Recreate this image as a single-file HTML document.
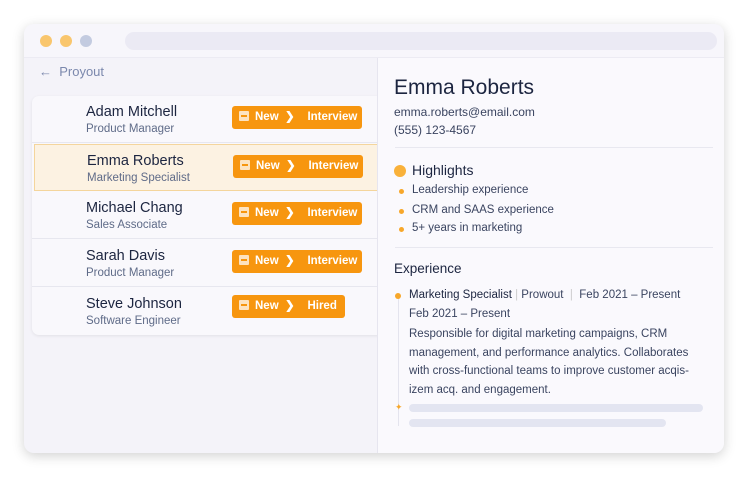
<!DOCTYPE html>
<html><head><style>
*{margin:0;padding:0;box-sizing:border-box}
body{width:750px;height:484px;background:#fff;font-family:"Liberation Sans",sans-serif;position:relative;overflow:hidden}
.win{position:absolute;left:24px;top:24px;width:700px;height:429px;background:#f4f3f9;border-radius:10px;box-shadow:0 3px 12px rgba(0,0,0,.18);overflow:hidden}
.top{position:absolute;left:0;top:0;width:700px;height:34px;border-bottom:1px solid #ecebf3;background:#f7f6fb}
.dot{position:absolute;top:11px;width:12px;height:12px;border-radius:50%}
.url{position:absolute;left:101px;top:8px;width:592px;height:18px;border-radius:9px;background:#ebeaf4}
.back{position:absolute;left:15px;top:40px;font-size:13px;color:#7b88ad}
.card{position:absolute;left:8px;top:72px;width:352px;height:239px;background:#f9f8fc;border-radius:7px;box-shadow:0 1px 3px rgba(0,0,0,.08)}
.row{position:absolute;left:0;width:352px;height:47px;border-bottom:1px solid #e7e7ef}
.row.sel{background:#fcf2e2;border:1px solid #f4d59c;left:2px;width:350px}
.nm{position:absolute;left:54px;top:8px;font-size:14.5px;color:#1c2540}
.sb{position:absolute;left:54px;top:27px;font-size:11.5px;color:#5f6b88}
.bd{position:absolute;left:200px;top:10px;height:23px;background:#f7960f;border-radius:3px;color:#fff;font-weight:bold;font-size:11.5px;line-height:23px;padding-left:7px}
.bd i{display:inline-block;width:10px;height:10px;background:#fde3c0;border-radius:1px;vertical-align:-1px;margin-right:6px;position:relative}
.bd i:after{content:"";position:absolute;left:2px;top:4px;width:6px;height:2px;background:#f7960f}
.right{position:absolute;left:353px;top:34px;width:347px;height:395px;background:#faf9fd;border-left:1px solid #e6e5ef}
.hr{position:absolute;left:17px;width:318px;height:1px;background:#e8e8f0}
.t{position:absolute;white-space:nowrap}
.bl{position:absolute;width:5px;height:5px;border-radius:50%;background:#f7a72a}
</style></head><body>
<div class="win">
<div class="top"><div class="dot" style="left:16px;background:#f9c66d"></div><div class="dot" style="left:36px;background:#f9c66d"></div><div class="dot" style="left:56px;background:#c3cbe0"></div><div class="url"></div></div>
<div class="back">&#8592;&nbsp;&nbsp;Proyout</div>
<div class="card">
<div class="row" style="top:0"><div class="nm">Adam Mitchell</div><div class="sb">Product Manager</div><div class="bd" style="width:130px"><i></i>New&nbsp;&nbsp;&#x276F;&nbsp;&nbsp;&nbsp;&nbsp;Interview</div></div>
<div class="row sel" style="top:48px"><div class="nm" style="left:52px">Emma Roberts</div><div class="sb" style="left:52px">Marketing Specialist</div><div class="bd" style="left:198px;width:130px"><i></i>New&nbsp;&nbsp;&#x276F;&nbsp;&nbsp;&nbsp;&nbsp;Interview</div></div>
<div class="row" style="top:96px"><div class="nm">Michael Chang</div><div class="sb">Sales Associate</div><div class="bd" style="width:130px"><i></i>New&nbsp;&nbsp;&#x276F;&nbsp;&nbsp;&nbsp;&nbsp;Interview</div></div>
<div class="row" style="top:144px"><div class="nm">Sarah Davis</div><div class="sb">Product Manager</div><div class="bd" style="width:130px"><i></i>New&nbsp;&nbsp;&#x276F;&nbsp;&nbsp;&nbsp;&nbsp;Interview</div></div>
<div class="row" style="top:192px;border:none"><div class="nm">Steve Johnson</div><div class="sb">Software Engineer</div><div class="bd" style="top:7px;width:113px"><i></i>New&nbsp;&nbsp;&#x276F;&nbsp;&nbsp;&nbsp;&nbsp;Hired</div></div>
</div>
<div class="right">
<div class="t" style="left:16px;top:18px;font-size:21px;color:#1c2540">Emma Roberts</div>
<div class="t" style="left:16px;top:47px;font-size:12px;color:#3a4460">emma.roberts@email.com</div>
<div class="t" style="left:16px;top:65px;font-size:12px;color:#3a4460">(555) 123-4567</div>
<div class="hr" style="top:89px"></div>
<div style="position:absolute;left:16px;top:107px;width:12px;height:12px;border-radius:50%;background:#f9b13a"></div>
<div class="t" style="left:34px;top:104px;font-size:14px;color:#1c2540">Highlights</div>
<div class="bl" style="left:21px;top:131px"></div><div class="t" style="left:34px;top:126px;font-size:11.5px;color:#3a4460">Leadership experience</div>
<div class="bl" style="left:21px;top:151px"></div><div class="t" style="left:34px;top:146px;font-size:11.5px;color:#3a4460">CRM and SAAS experience</div>
<div class="bl" style="left:21px;top:169px"></div><div class="t" style="left:34px;top:164px;font-size:11.5px;color:#3a4460">5+ years in marketing</div>
<div class="hr" style="top:189px"></div>
<div class="t" style="left:16px;top:203px;font-size:13.5px;color:#1c2540">Experience</div>
<div style="position:absolute;left:20px;top:238px;width:1px;height:130px;background:#e4e4ee"></div>
<div class="bl" style="left:17px;top:235px;width:6px;height:6px"></div>
<div class="t" style="left:31px;top:231px;font-size:11.5px;color:#3a4460"><span style="color:#1c2540">Marketing Specialist</span> <span style="color:#ccc">|</span> Prowout &nbsp;<span style="color:#ccc">|</span>&nbsp; Feb 2021 – Present</div>
<div class="t" style="left:31px;top:250px;font-size:11.5px;color:#3a4460">Feb 2021 – Present</div>
<div style="position:absolute;left:31px;top:267px;width:320px;font-size:11.5px;line-height:18.5px;color:#3a4460;white-space:nowrap">Responsible for digital marketing campaigns, CRM<br>management, and performance analytics. Collaborates<br>with cross-functional teams to improve customer acqis-<br>izem acq. and engagement.</div>
<div class="t" style="left:17px;top:344px;font-size:9px;color:#f7a72a">&#10022;</div>
<div style="position:absolute;left:31px;top:346px;width:294px;height:8px;border-radius:4px;background:#e3e5f1"></div>
<div style="position:absolute;left:31px;top:361px;width:257px;height:8px;border-radius:4px;background:#e3e5f1"></div>
</div>
</div>
</body></html>
